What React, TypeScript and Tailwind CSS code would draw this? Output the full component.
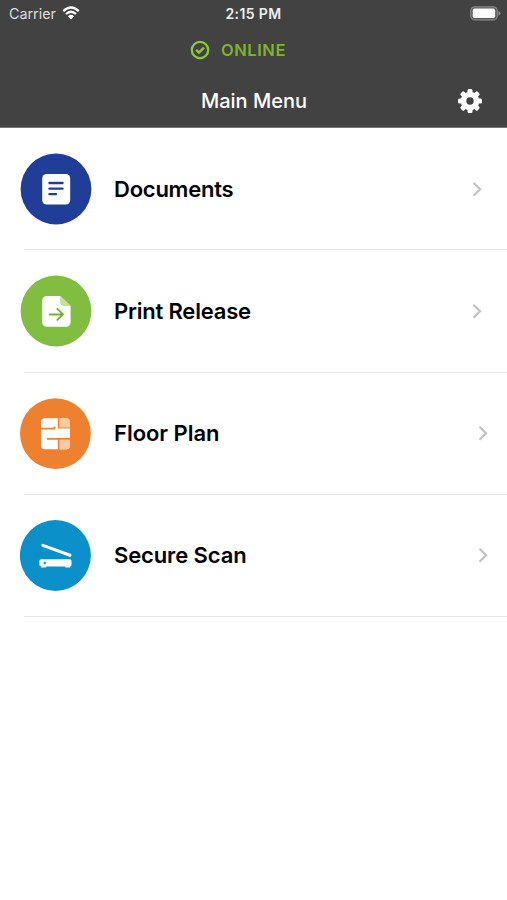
import type { ReactNode } from "react";

type Item = { label: string; icon: ReactNode; chevron: string; tracking: string };

const DocumentsIcon = () => (
  <svg viewBox="0 0 72 72" className="size-[72px]">
    <circle cx="36" cy="36" r="35.4" fill="#203e98" />
    <rect x="22.2" y="21" width="28" height="30.5" rx="4.5" fill="#fff" />
    <path d="M29.4 30H42.6M29.4 35.7H42.6M29.4 41.2H36" stroke="#203e98" strokeWidth="2.3" strokeLinecap="round" />
  </svg>
);

const ReleaseIcon = () => (
  <svg viewBox="0 0 72 72" className="size-[72px]">
    <circle cx="36" cy="36" r="35.4" fill="#81bd41" />
    <path d="M26.5 21H40.6V27.5Q40.6 30.5 43.6 30.5H50.6V47.5A4.3 4.3 0 0 1 46.3 51.8H26.5A4.3 4.3 0 0 1 22.2 47.5V25.3A4.3 4.3 0 0 1 26.5 21Z" fill="#fff" />
    <path d="M40.6 21L50.6 30.5H43.6Q40.6 30.5 40.6 27.5Z" fill="#c9e28e" />
    <path d="M29.8 39.4H42.8M37.4 33.9L43 39.4L37.4 44.9" fill="none" stroke="#72b432" strokeWidth="2" strokeLinecap="round" strokeLinejoin="round" />
  </svg>
);

const FloorPlanIcon = () => (
  <svg viewBox="0 0 72 72" className="size-[72px]">
    <circle cx="35.4" cy="36.6" r="35.4" fill="#ee812f" />
    <rect x="21" y="21.2" width="29" height="31" rx="3.8" fill="#fff" />
    <path d="M39.6 21.2H46.2A3.8 3.8 0 0 1 50 25V31H39.6ZM39.6 42.4H50V48.4A3.8 3.8 0 0 1 46.2 52.2H39.6Z" fill="#fbcaa5" />
    <path d="M38.7 20.5V31.2M20.5 31.7H34.4V29.6M27 41.8H50.5M38.7 41.8V53" fill="none" stroke="#ee812f" strokeWidth="1.7" />
    <path d="M38 31H50.5" stroke="#ee812f" strokeWidth="1" />
  </svg>
);

const ScanIcon = () => (
  <svg viewBox="0 0 72 72" className="size-[72px]">
    <circle cx="35.4" cy="36.5" r="35.5" fill="#0b90ca" />
    <path d="M22.9 26.4L50 36.3" stroke="#fff" strokeWidth="3.1" strokeLinecap="round" />
    <path d="M21 40.3H49.8Q51.5 40.3 51.5 42V46Q51.5 47.3 50.2 47.3V48.4H45.5L44.8 47.6H26.4L25.7 48.4H21V47.3Q19.4 47.3 19.4 46V42Q19.4 40.3 21 40.3Z" fill="#fff" />
    <circle cx="24.8" cy="44" r="1.2" fill="#0b90ca" />
  </svg>
);

const items: Item[] = [
  { label: "Documents", icon: <DocumentsIcon />, chevron: "mr-[25px]", tracking: "tracking-[-0.24px]" },
  { label: "Print Release", icon: <ReleaseIcon />, chevron: "mr-[25px]", tracking: "tracking-[-0.2px]" },
  { label: "Floor Plan", icon: <FloorPlanIcon />, chevron: "mr-[19px]", tracking: "tracking-[-0.03px]" },
  { label: "Secure Scan", icon: <ScanIcon />, chevron: "mr-[19px]", tracking: "tracking-[-0.12px]" },
];

const teeth = [0, 45, 90, 135, 180, 225, 270, 315];

export default function App() {
  return (
    <div className="h-[900px] w-[507px] overflow-hidden bg-white font-['Inter',sans-serif]">
      <header className="flex h-[128px] flex-col border-b border-[#777] bg-[#424242] text-white">
        <div className="grid h-[27px] grid-cols-3 items-center">
          <div className="flex items-center gap-[6px] pl-[9px]">
            <span className="pt-px text-[14.3px] leading-none text-[#dedede]">Carrier</span>
            <svg viewBox="0 0 18 14" className="h-[14px] w-[18px]">
              <path d="M1.2 5.1Q9-2 16.8 5.1M4 8Q9 3.5 14 8" fill="none" stroke="#fff" strokeWidth="2.3" />
              <path d="M6 10.2Q9 7.5 12 10.2L9 13.4Z" fill="#fff" />
            </svg>
          </div>
          <span className="text-center text-[14px] font-semibold leading-none tracking-[0.4px] text-[#eee]">2:15 PM</span>
          <div className="flex justify-end pr-[6px]">
            <svg viewBox="0 0 31 15" className="h-[15px] w-[31px]">
              <rect x=".8" y=".8" width="26.4" height="13" rx="3.8" fill="#555" stroke="#898989" strokeWidth="1.2" />
              <rect x="2.7" y="2.6" width="22.5" height="9.4" rx="1.8" fill="#fff" />
              <path d="M28.4 5Q30.5 5.7 30.5 7.3T28.4 9.6Z" fill="#898989" />
            </svg>
          </div>
        </div>
        <div className="flex h-[46px] items-center pl-[190px]">
          <svg viewBox="0 0 20 20" className="size-5">
            <circle cx="10" cy="10" r="8.2" fill="none" stroke="#8cc83c" strokeWidth="2.3" />
            <path d="M6.1 9.8L9 12.6L14 7.6" fill="none" stroke="#8cc83c" strokeWidth="2.5" />
          </svg>
          <span className="ml-[11px] text-[16.5px] font-semibold leading-none tracking-[0.55px] text-[#7db52a]">ONLINE</span>
        </div>
        <div className="grid h-[54px] grid-cols-[1fr_auto_1fr] items-center pt-[2px]">
          <h1 className="col-start-2 pl-px text-[20px] font-medium leading-none">Main Menu</h1>
          <svg viewBox="-12 -12 24 24" className="mr-[25px] size-6 justify-self-end">
            <circle r="6.5" fill="none" stroke="#fff" strokeWidth="5.6" />
            {teeth.map((a) => (
              <rect key={a} x="-2.5" y="-12" width="5" height="5" rx="1.5" fill="#fff" transform={`rotate(${a})`} />
            ))}
          </svg>
        </div>
      </header>
      <main>
        {items.map((item) => (
          <div key={item.label} className="flex h-[122.25px] flex-col">
            <div className="flex flex-1 items-center pl-5">
              {item.icon}
              <span className={`ml-[22px] flex-1 text-[22px] font-semibold leading-none text-black ${item.tracking}`}>{item.label}</span>
              <svg viewBox="0 0 10 16" className={`h-4 w-[10px] ${item.chevron}`}>
                <path d="M1.5 1.8L8.1 8.3L1.5 14.8" fill="none" stroke="#c2c2c4" strokeWidth="2.2" />
              </svg>
            </div>
            <div className="ml-6 h-px bg-[#e6e6e6]" />
          </div>
        ))}
      </main>
    </div>
  );
}
